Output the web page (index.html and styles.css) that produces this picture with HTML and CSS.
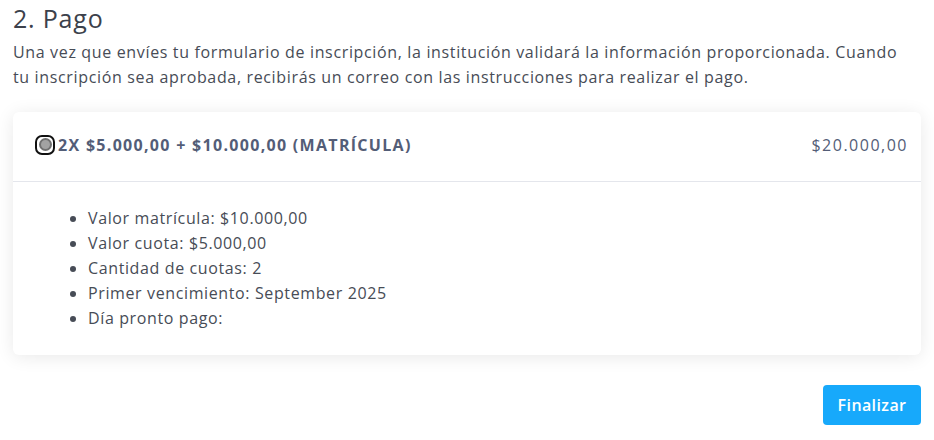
FILE: index.html
```html
<!DOCTYPE html>
<html lang="es">
<head>
<meta charset="utf-8">
<link rel="stylesheet" href="styles.css">
</head>
<body>
<div class="page">
  <h2 class="title">2. Pago</h2>
  <p class="intro">Una vez que envíes tu formulario de inscripción, la institución validará la información proporcionada. Cuando tu inscripción sea aprobada, recibirás un correo con las instrucciones para realizar el pago.</p>
  <div class="card">
    <div class="card-head">
      <label class="option">
        <span class="radio"><span class="dot"></span></span>
        <span class="plan">2X $5.000,00 + $10.000,00 (MATRÍCULA)</span>
      </label>
      <span class="price">$20.000,00</span>
    </div>
    <div class="card-body">
      <ul class="details">
        <li>Valor matrícula: $10.000,00</li>
        <li>Valor cuota: $5.000,00</li>
        <li>Cantidad de cuotas: 2</li>
        <li>Primer vencimiento: September 2025</li>
        <li>Día pronto pago:</li>
      </ul>
    </div>
  </div>
  <div class="actions">
    <button class="btn">Finalizar</button>
  </div>
</div>
</body>
</html>
```

FILE: styles.css
```css
html, body {
  margin: 0;
  padding: 0;
  background: #ffffff;
}
body {
  font-family: "Open Sans", "Noto Sans", sans-serif;
  color: #474c56;
}
.page {
  padding: 0 13px;
}
.title {
  margin: 0;
  padding-top: 2px;
  font-size: 25px;
  font-weight: 400;
  line-height: 32px;
  letter-spacing: 0.8px;
  color: #3c414b;
}
.intro {
  margin: 6px 0 0;
  padding-right: 12px;
  font-size: 16px;
  line-height: 25px;
  letter-spacing: 0.65px;
  color: #474c56;
}
.card {
  margin-top: 22px;
  background: #fff;
  border-radius: 6px;
  box-shadow: 0 2px 18px rgba(0, 0, 0, 0.09);
}
.card-head {
  height: 69px;
  display: flex;
  align-items: center;
  justify-content: space-between;
  padding: 0 13px 0 22px;
  border-bottom: 1px solid #e4e6ec;
}
.option {
  display: flex;
  align-items: center;
  margin-top: -4px;
}
.radio {
  width: 16px;
  height: 16px;
  border: 2px solid #111;
  border-radius: 7px;
  display: flex;
  align-items: center;
  justify-content: center;
  background: #fff;
}
.dot {
  width: 9px;
  height: 9px;
  border-radius: 50%;
  background: #a2a2a2;
  border: 2px solid #707070;
}
.plan {
  margin-left: 3px;
  font-size: 16px;
  font-weight: 700;
  color: #535d77;
  letter-spacing: 1.3px;
}
.price {
  font-size: 16px;
  color: #535d77;
  letter-spacing: 1.5px;
  margin-top: -4px;
}
.card-body {
  padding: 24px 0 24px 0;
}
.details {
  margin: 0;
  padding-left: 75px;
  font-size: 16px;
  line-height: 25px;
  color: #474c56;
  letter-spacing: 0.62px;
}
.actions {
  display: flex;
  justify-content: flex-end;
  margin-top: 30px;
}
.btn {
  height: 40px;
  width: 98px;
  border: none;
  border-radius: 4px;
  background: #17a9fb;
  color: #fff;
  font-family: "Open Sans", "Noto Sans", sans-serif;
  font-size: 16px;
  font-weight: 600;
  letter-spacing: 0.4px;
}
```
